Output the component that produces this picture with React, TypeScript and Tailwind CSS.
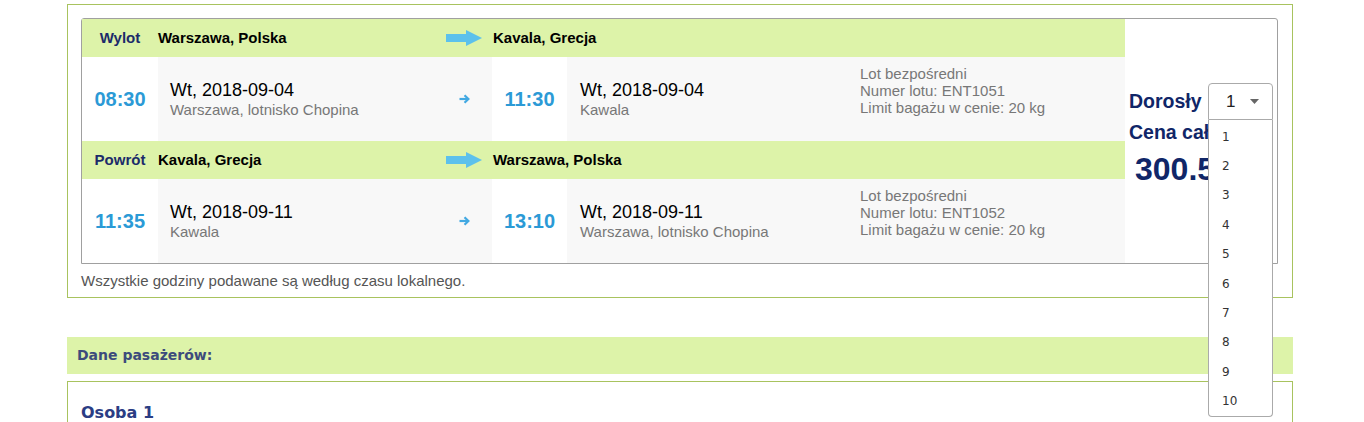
import React from "react";

const BigArrow = () => (
  <svg width="36" height="16" viewBox="0 0 36 16" className="block">
    <path d="M0 4 H20 V0 L36 8 L20 16 V12 H0 Z" fill="#5cc1ec" />
  </svg>
);

const SmallArrow = () => (
  <svg width="11" height="10" viewBox="0 0 11 10" className="block">
    <path d="M0.5 5 H9" stroke="#43a9e2" strokeWidth="2.2" fill="none" />
    <path d="M5.5 1.2 L9.4 5 L5.5 8.8" stroke="#43a9e2" strokeWidth="2.2" fill="none" />
  </svg>
);

type Leg = {
  label: string;
  from: string;
  to: string;
  depTime: string;
  depDate: string;
  depAirport: string;
  arrTime: string;
  arrDate: string;
  arrAirport: string;
  flight: string;
};

const legs: Leg[] = [
  {
    label: "Wylot",
    from: "Warszawa, Polska",
    to: "Kavala, Grecja",
    depTime: "08:30",
    depDate: "Wt, 2018-09-04",
    depAirport: "Warszawa, lotnisko Chopina",
    arrTime: "11:30",
    arrDate: "Wt, 2018-09-04",
    arrAirport: "Kawala",
    flight: "ENT1051",
  },
  {
    label: "Powrót",
    from: "Kavala, Grecja",
    to: "Warszawa, Polska",
    depTime: "11:35",
    depDate: "Wt, 2018-09-11",
    depAirport: "Kawala",
    arrTime: "13:10",
    arrDate: "Wt, 2018-09-11",
    arrAirport: "Warszawa, lotnisko Chopina",
    flight: "ENT1052",
  },
];

function LegBlock({ leg }: { leg: Leg }) {
  return (
    <div className="flex flex-col">
      <div className="flex h-[38px] items-center bg-[#ddf3a9]">
        <div className="w-[76px] text-center text-[15px] font-bold text-[#1b2b6a]">{leg.label}</div>
        <div className="flex w-[334px] items-center justify-between pr-[10px]">
          <span className="text-[15px] font-bold text-black">{leg.from}</span>
          <BigArrow />
        </div>
        <div className="pl-[1px] text-[15px] font-bold text-black">{leg.to}</div>
      </div>
      <div className="flex h-[84px]">
        <div className="flex w-[76px] items-center justify-center bg-white text-[20px] font-bold text-[#2b9ad6]">
          {leg.depTime}
        </div>
        <div className="flex w-[334px] items-center justify-between bg-[#f8f8f8] pl-[12px] pr-[22px]">
          <div className="flex flex-col">
            <span className="text-[18px] leading-[22px] text-black">{leg.depDate}</span>
            <span className="text-[15px] leading-[18px] text-[#777]">{leg.depAirport}</span>
          </div>
          <SmallArrow />
        </div>
        <div className="flex w-[75px] items-center justify-center bg-white text-[20px] font-bold text-[#2b9ad6]">
          {leg.arrTime}
        </div>
        <div className="flex flex-1 bg-[#f8f8f8]">
          <div className="flex w-[281px] flex-col justify-center pl-[13px]">
            <span className="text-[18px] leading-[22px] text-black">{leg.arrDate}</span>
            <span className="text-[15px] leading-[18px] text-[#777]">{leg.arrAirport}</span>
          </div>
          <div className="flex flex-col pl-[12px] pt-[8px] text-[15px] leading-[17px] text-[#777]">
            <span>Lot bezpośredni</span>
            <span>Numer lotu: {leg.flight}</span>
            <span>Limit bagażu w cenie: 20 kg</span>
          </div>
        </div>
      </div>
    </div>
  );
}

export default function App() {
  const options = [1, 2, 3, 4, 5, 6, 7, 8, 9, 10];
  return (
    <div className="min-h-[422px] bg-white pt-[4px] font-['Liberation_Sans',Arial,sans-serif]">
      <div className="ml-[67px] w-[1226px]">
        <div className="border border-[#a8c35e] pb-[8px] pl-[13px] pr-[14px] pt-[13px]">
          <div className="flex rounded-t-[3px] border border-[#a0a0a0] bg-white">
            <div className="flex w-[1043px] flex-col">
              {legs.map((l) => (
                <LegBlock key={l.label} leg={l} />
              ))}
            </div>
            <div className="relative w-[152px] pl-[4px] pt-[64px]">
              <div className="flex items-center">
                <span className="w-[79px] text-[19.5px] font-bold text-[#102668]">Dorosły</span>
                <div className="relative z-10 w-[65px]">
                  <div className="flex h-[37px] items-center justify-between rounded-t-[4px] border border-[#aaaaaa] bg-white pl-[17px] pr-[13px]">
                    <span className="text-[17px] text-[#222]">1</span>
                    <svg width="9" height="5" viewBox="0 0 9 5" className="block">
                      <path d="M0 0 H9 L4.5 5 Z" fill="#666" />
                    </svg>
                  </div>
                  <div className="absolute left-0 top-full w-[65px] rounded-b-[4px] border border-t-0 border-[#aaaaaa] bg-white pt-[2px]">
                    {options.map((o) => (
                      <div
                        key={o}
                        className="flex h-[29.4px] items-center pl-[13px] font-['DejaVu_Sans',Verdana,sans-serif] text-[12px] text-[#333]"
                      >
                        {o}
                      </div>
                    ))}
                  </div>
                </div>
              </div>
              <div className="w-[143px] overflow-hidden whitespace-nowrap">
                <div className="text-[19.5px] font-bold leading-[24px] text-[#102668]">Cena całkowita:</div>
                <div className="pl-[6px] pt-[4px] text-[32px] font-bold leading-[42px] text-[#102668]">
                  300.50 zł
                </div>
              </div>
            </div>
          </div>
          <div className="pt-[8px] text-[15px] leading-[17px] text-[#555]">
            Wszystkie godziny podawane są według czasu lokalnego.
          </div>
        </div>

        <div className="mt-[39px] flex h-[37px] items-center bg-[#ddf3a9] pl-[10px] font-['DejaVu_Sans',Verdana,sans-serif] text-[14px] font-bold text-[#3c4b7c]">
          Dane pasażerów:
        </div>

        <div className="mt-[7px] h-[120px] border border-[#a8c35e] pl-[13px] pt-[19px]">
          <div className="font-['DejaVu_Sans',Verdana,sans-serif] text-[16px] font-bold text-[#2b3d84]">Osoba 1</div>
        </div>
      </div>
    </div>
  );
}
